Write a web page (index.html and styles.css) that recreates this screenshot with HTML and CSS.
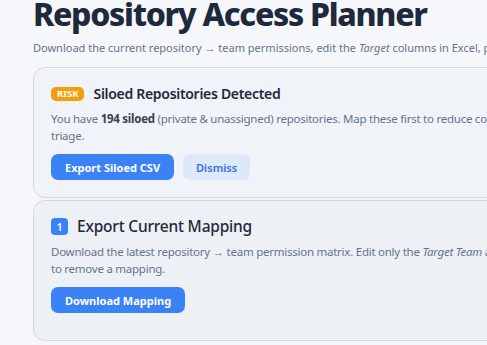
FILE: index.html
```html
<!DOCTYPE html>
<html lang="en">
<head>
    <meta charset="UTF-8">
    <meta name="viewport" content="width=device-width, initial-scale=1.0">
    <title>Repository Access Planner</title>
    <link rel="stylesheet" href="styles.css">
</head>
<body>
    <div class="page">
        <h1>Repository Access Planner</h1>
        <p class="lead">Download the current repository → team permissions, edit the <em>Target</em> columns in Excel, preview the changes, then apply them.</p>

        <div class="card card-risk">
            <div class="card-head">
                <span class="risk-badge">RISK</span>
                <h2>Siloed Repositories Detected</h2>
            </div>
            <p class="card-text">You have <strong>194 siloed</strong> (private &amp; unassigned) repositories. Map these first to reduce concentration risk and speed up access review triage.</p>
            <div class="actions">
                <button class="btn btn-primary">Export Siloed CSV</button>
                <button class="btn btn-soft">Dismiss</button>
            </div>
        </div>

        <div class="card card-step">
            <div class="card-head">
                <span class="step">1</span>
                <h2 class="step-title">Export Current Mapping</h2>
            </div>
            <p class="card-text">Download the latest repository → team permission matrix. Edit only the <em>Target Team</em> and <em>Target Permission</em> columns, or blank them to remove a mapping.</p>
            <div class="actions">
                <button class="btn btn-primary">Download Mapping</button>
            </div>
        </div>
    </div>
</body>
</html>
```

FILE: styles.css
```css
* {
    margin: 0;
    padding: 0;
    box-sizing: border-box;
}

body {
    font-family: 'Noto Sans', 'Open Sans', Arial, sans-serif;
    background: #f5f7fa;
    color: #1f2937;
    overflow: hidden;
}

.page {
    width: 744px;
    padding-left: 33px;
    margin-top: -6px;
}

h1 {
    font-size: 32px;
    font-weight: 800;
    color: #1e293b;
    line-height: 40px;
    letter-spacing: -1.3px;
}

.lead {
    font-size: 11px;
    line-height: 15px;
    color: #64748b;
    margin-top: 6px;
    margin-bottom: 12px;
    white-space: nowrap;
}

.card {
    background: #f0f3f8;
    border: 1px solid #d3d8e0;
    border-radius: 12px;
    padding: 16px 17px 17px;
    margin-bottom: 2px;
}

.card-step {
    background: #edf0f5;
    padding-top: 15px;
    padding-bottom: 27px;
}

.card-head {
    display: flex;
    align-items: center;
    gap: 9px;
    margin-bottom: 7px;
}

.risk-badge {
    background: #f59e0b;
    color: #fff;
    font-size: 9.5px;
    font-weight: 700;
    line-height: 14px;
    padding: 0 6px;
    border-radius: 5px;
}

h2 {
    font-size: 14px;
    line-height: 20px;
    font-weight: 600;
    color: #1e293b;
    letter-spacing: -0.3px;
}

.step {
    background: #3b82f6;
    color: #fff;
    font-size: 10px;
    font-weight: 600;
    width: 17px;
    height: 17px;
    border-radius: 4px;
    display: flex;
    align-items: center;
    justify-content: center;
}

.step-title {
    font-size: 15.5px;
    line-height: 21px;
    font-weight: 500;
    letter-spacing: -0.2px;
}

.card-text {
    font-size: 11.5px;
    line-height: 16.5px;
    letter-spacing: -0.25px;
    color: #64748b;
    margin-bottom: 10px;
}

.card-text strong {
    color: #374151;
}

.actions {
    display: flex;
    gap: 9px;
}

.btn {
    font-family: inherit;
    font-size: 11px;
    font-weight: 700;
    border: none;
    border-radius: 7px;
    height: 26px;
    padding: 0 14px;
    cursor: pointer;
}

.btn-primary {
    background: #3b82f6;
    color: #fff;
}

.btn-soft {
    background: #dde8fb;
    color: #3b6fe0;
    font-weight: 600;
    padding: 0 13px;
}
```
